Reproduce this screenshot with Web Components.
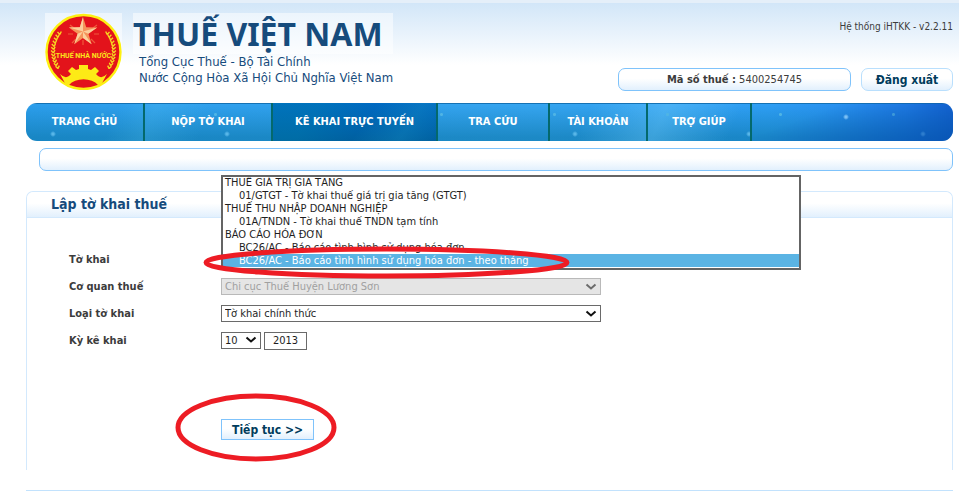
<!DOCTYPE html>
<html lang="vi">
<head>
<meta charset="utf-8">
<title>Thuế Việt Nam - iHTKK</title>
<style>
  body {
    margin: 0;
    background: #fff;
    color: #3c3c3c;
    font: 11px/16px "DejaVu Sans Condensed", "Noto Sans", sans-serif;
    --line: #7fc3fb;
    --line-soft: #d3e9fd;
    --navy: #164b7c;
  }
</style>
</head>
<body>
<tax-page>
  <site-header slot="header" version="Hệ thống iHTKK - v2.2.11" tax-code="5400254745"></site-header>
  <main-nav slot="nav"></main-nav>
  <panel-box heading="Lập tờ khai thuế">
    <declaration-form></declaration-form>
  </panel-box>
</tax-page>

<script>
// page frame
class TaxPage extends HTMLElement {
  constructor() {
    super();
    this.attachShadow({ mode: "open" }).innerHTML = `
      <style>
        :host {
          display: block;
          border-top: 3px solid #e5eff9;
          background: linear-gradient(#d2e6f8, #fff 62px) no-repeat;
        }
        .content { padding: 0 6px 0 26px; }
        .subbar {
          height: 21px;
          margin: 7px 0 20px 13px;
          border: 1px solid var(--line);
          border-radius: 7px;
          background: linear-gradient(#fff 45%, #e2f0fd);
        }
        footer { margin-top: 20px; border-top: 1px solid #c2e2fd; }
      </style>
      <slot name="header"></slot>
      <div class="content">
        <slot name="nav"></slot>
        <div class="subbar"></div>
        <slot></slot>
        <footer></footer>
      </div>
    `;
  }
}

// round red emblem with star, wheat and gear
class TaxEmblem extends HTMLElement {
  constructor() {
    super();
    this.attachShadow({ mode: "open" }).innerHTML = `
      <style>
        :host { display: block; width: 77px; height: 77px; background: #ffffff80; }
        svg { display: block; }
      </style>
      <svg width="77" height="77" viewBox="0 0 77 77">
        <circle cx="38.5" cy="39" r="37" fill="#e3131b" stroke="#fdf012" stroke-width="2.4"/>
        <path d="M25 12l4 3M52 12l-4 3M23 21l5 0M54 21l-5 0M27 30l4-4M50 30l-4-4M38 27v5" stroke="#ee5a3c" stroke-width="1.2"/>
        <path d="M38 4l3.2 10.2 11 .2-8.8 6.4 3.3 10.4L38 25l-8.7 6.2 3.3-10.4-8.8-6.4 11-.2z" fill="#f5935a"/>
        <path d="M38 4v14.5l-3.2-4.3zM52.2 14.4L38 18.5l5.4 2.3zM46.7 31.2L38 18.5V25zM29.3 31.2L38 18.5l-5.4 2.3zM23.8 14.4L38 18.5l-3.2-4.3z" fill="#fbcf9c"/>
        <g class="wheat"></g>
        <path d="M15 61q5 5 9 2l2-2-3-3 4-4 4 3 3-1v-4h9v4l3 1 4-3 4 4-3 3 2 2q4 3 9-2l-6 11-3 0a17 12 0 0 0-29 0l-3 0z" fill="#fdea16"/>
        <text x="38.5" y="45" text-anchor="middle" fill="#fbe51b" font-family="Roboto, sans-serif" font-weight="700" font-size="7">THUẾ NHÀ NƯỚC</text>
      </svg>
    `;
    this.drawWheat();
  }

  drawWheat() {
    let d = "";
    for (let i = 0; i < 12; i++) {
      const a = (142 + i * 6.3) * Math.PI / 180;
      for (const s of [-1, 1]) {
        const x = (38.5 - s * Math.cos(a) * 30).toFixed(1);
        const y = (40 - Math.sin(a) * 30).toFixed(1);
        d += `M${x} ${y}l${s * 2.4} -2.4M${x} ${y}l${-s * 1.4} -3`;
      }
    }
    this.shadowRoot.querySelector(".wheat").innerHTML =
      `<path d="${d}" fill="none" stroke="#f8d420" stroke-width="1.4"/>`;
  }
}

class SiteHeader extends HTMLElement {
  connectedCallback() {
    this.attachShadow({ mode: "open" }).innerHTML = `
      <style>
        :host {
          display: flex;
          justify-content: space-between;
          height: 90px;
          padding: 10px 6px 0 45px;
        }
        .brand { display: flex; gap: 11px; color: var(--navy); }
        h1 {
          margin: 0;
          height: 41px;
          background: #ffffff80;
          font: bold 32px/41px "Noto Sans", sans-serif;
        }
        .brand p { margin: 0; padding-left: 6px; font-size: 13px; }
        .side {
          display: flex;
          flex-direction: column;
          align-items: flex-end;
          justify-content: space-between;
          padding: 6px 0 12px;
        }
        .version { font-size: 10px; }
        .account { display: flex; gap: 10px; }
        .code, button {
          box-sizing: border-box;
          height: 23px;
          border: 1px solid var(--line);
          border-radius: 7px;
          background: linear-gradient(#fff 45%, #e2f0fd);
          text-align: center;
        }
        .code { width: 233px; line-height: 22px; }
        button {
          width: 92px;
          padding: 0;
          border-color: #b9dffd;
          color: #003c5c;
          font: bold 12px "DejaVu Sans Condensed", sans-serif;
        }
      </style>
      <div class="brand">
        <tax-emblem></tax-emblem>
        <div>
          <h1>THUẾ VIỆT NAM</h1>
          <p>Tổng Cục Thuế - Bộ Tài Chính<br>Nước Cộng Hòa Xã Hội Chủ Nghĩa Việt Nam</p>
        </div>
      </div>
      <div class="side">
        <span class="version">${this.getAttribute("version")}</span>
        <div class="account">
          <div class="code"><b>Mã số thuế :</b> ${this.getAttribute("tax-code")}</div>
          <button type="button">Đăng xuất</button>
        </div>
      </div>
    `;
  }
}

class MainNav extends HTMLElement {
  constructor() {
    super();
    this.attachShadow({ mode: "open" }).innerHTML = `
      <style>
        :host { display: block; }
        nav {
          display: grid;
          grid-template-columns: 119px 128px 165px 112px 98px 104px 1fr;
          height: 38px;
          border-radius: 11px;
          overflow: hidden;
          background:
            linear-gradient(#1572b4, #1572b4) top / 100% 1px no-repeat,
            radial-gradient(circle, #8cd2ff 0 1px, transparent 3px) 700px -5px / 240px 38px no-repeat,
            radial-gradient(circle, #58b6e8 0 1px, transparent 3px) -60px 12px / 174px 38px,
            radial-gradient(circle, #4fb4e4 0 1px, transparent 2px) 20px -10px / 113px 43px,
            linear-gradient(115deg, transparent 10%, #5cc8f033 14%, transparent 20% 60%, #7cd4ff55 68%, transparent 76%),
            linear-gradient(transparent, #0b76a899 90%),
            linear-gradient(90deg, #2d9fee, #37a6f2 55%, #2f9ff6 80%, #2484ee 95%, #1b6fdd);
        }
        nav::after { content: ""; background: linear-gradient(160deg, transparent 30%, #0446b4aa); }
        a {
          border-right: 2px solid #04696c;
          color: #fff;
          font-weight: bold;
          line-height: 38px;
          text-align: center;
          text-decoration: none;
          white-space: nowrap;
        }
        a[aria-current] {
          background:
            linear-gradient(125deg, #0085b055 25%, transparent 55%, #1790c455 80%, transparent),
            linear-gradient(#0069c2, #00609f);
        }
      </style>
      <nav>
        <a href="#">TRANG CHỦ</a>
        <a href="#">NỘP TỜ KHAI</a>
        <a href="#" aria-current="page">KÊ KHAI TRỰC TUYẾN</a>
        <a href="#">TRA CỨU</a>
        <a href="#">TÀI KHOẢN</a>
        <a href="#">TRỢ GIÚP</a>
      </nav>
    `;
  }
}

class PanelBox extends HTMLElement {
  connectedCallback() {
    this.attachShadow({ mode: "open" }).innerHTML = `
      <style>
        :host {
          display: block;
          border: 1px solid var(--line-soft);
          border-bottom: 0;
          border-radius: 7px 7px 0 0;
        }
        h2 {
          margin: 0;
          padding-left: 24px;
          border-bottom: 1px solid var(--line-soft);
          border-radius: 7px 7px 0 0;
          background: linear-gradient(#fff 45%, #e2f0fd);
          color: var(--navy);
          font-size: 14px;
          line-height: 25px;
        }
      </style>
      <h2>${this.getAttribute("heading")}</h2>
      <slot></slot>
    `;
  }
}

// red ring laid over its container, sized by the user
class MarkRing extends HTMLElement {
  constructor() {
    super();
    this.attachShadow({ mode: "open" }).innerHTML = `
      <style>
        :host {
          position: absolute;
          z-index: 2;
          pointer-events: none;
        }
        svg { display: block; width: 100%; height: 100%; overflow: visible; }
        ellipse {
          cx: 50%;
          cy: 50%;
          rx: calc(50% - 3px);
          ry: calc(50% - 3px);
          fill: none;
          stroke: #ed1c24;
          stroke-width: 5px;
        }
      </style>
      <svg><ellipse/></svg>
    `;
  }
}

const arrow = (color) =>
  `url("data:image/svg+xml,%3Csvg xmlns='http://www.w3.org/2000/svg' width='12' height='8'%3E%3Cpath d='M1.5 1.5L6 5.5l4.5-4' fill='none' stroke='%23${color}' stroke-width='2'/%3E%3C/svg%3E")`;

class DeclarationForm extends HTMLElement {
  constructor() {
    super();
    this.attachShadow({ mode: "open" }).innerHTML = `
      <style>
        :host { display: block; }
        form { padding: 28px 0 30px 42px; }
        .row {
          display: grid;
          grid-template-columns: 152px 1fr;
          align-items: center;
          height: 27px;
        }
        .row label { font-weight: bold; }
        .field { position: relative; display: flex; gap: 3px; }
        select, input {
          box-sizing: border-box;
          height: 17px;
          margin: 0;
          padding: 0 3px;
          border: 1px solid #6a6a6a;
          border-radius: 0;
          background-color: #fff;
          color: #1e1e1e;
          font: inherit;
          line-height: 15px;
        }
        select {
          width: 380px;
          appearance: none;
          background-image: ${arrow("111111")};
          background-repeat: no-repeat;
          background-position: right 3px center;
        }
        select:disabled {
          border-color: #b9b9b9;
          background-color: #e5e5e5;
          background-image: ${arrow("6c6c6c")};
          color: #a0a0a0;
          opacity: 1;
        }
        #thang { width: 40px; }
        #nam { width: 43px; height: 18px; text-align: center; }
        .popup { position: absolute; bottom: -10px; left: 0; z-index: 1; }
        .popup select {
          display: block;
          width: 580px;
          height: 95px;
          padding: 0;
          border: 2px solid #646464;
          background-image: none;
          overflow: hidden;
        }
        optgroup, option { font: inherit; }
        optgroup { padding: 0; line-height: 12px; }
        .popup option {
          box-sizing: border-box;
          min-height: 0;
          height: 13px;
          padding: 0 0 0 16px;
          line-height: 13px;
        }
        .popup option:first-of-type { margin-top: -1px; }
        .popup option::before { content: none; }
        .popup option:checked {
          background: #5bb4e4 linear-gradient(#5bb4e4, #5bb4e4);
          color: #fff;
          -webkit-text-fill-color: #fff;
        }
        .list-ring { left: -18px; bottom: -19px; width: 367px; height: 33px; }
        .actions { position: relative; margin: 65px 0 0 152px; }
        .actions button {
          display: block;
          box-sizing: border-box;
          width: 93px;
          height: 21px;
          padding: 0;
          border: 1px solid var(--line);
          background: linear-gradient(#fff 45%, #e2f0fd);
          color: #003c5c;
          font: bold 12px "DejaVu Sans Condensed", sans-serif;
        }
        .button-ring { left: -46px; top: -26px; width: 162px; height: 69px; }
      </style>
      <form>
        <div class="row">
          <label for="to-khai">Tờ khai</label>
          <div class="field">
            <div class="popup">
              <select id="to-khai" size="7">
                <optgroup label="THUẾ GIÁ TRỊ GIA TĂNG">
                  <option>01/GTGT - Tờ khai thuế giá trị gia tăng (GTGT)</option>
                </optgroup>
                <optgroup label="THUẾ THU NHẬP DOANH NGHIỆP">
                  <option>01A/TNDN - Tờ khai thuế TNDN tạm tính</option>
                </optgroup>
                <optgroup label="BÁO CÁO HÓA ĐƠN">
                  <option>BC26/AC - Báo cáo tình hình sử dụng hóa đơn</option>
                  <option selected>BC26/AC - Báo cáo tình hình sử dụng hóa đơn - theo tháng</option>
                </optgroup>
              </select>
            </div>
            <mark-ring class="list-ring"></mark-ring>
          </div>
        </div>
        <div class="row">
          <label for="co-quan">Cơ quan thuế</label>
          <div class="field">
            <select id="co-quan" disabled><option>Chi cục Thuế Huyện Lương Sơn</option></select>
          </div>
        </div>
        <div class="row">
          <label for="loai">Loại tờ khai</label>
          <div class="field">
            <select id="loai"><option>Tờ khai chính thức</option></select>
          </div>
        </div>
        <div class="row">
          <label for="thang">Kỳ kê khai</label>
          <div class="field">
            <select id="thang"><option>10</option></select>
            <input id="nam" value="2013" aria-label="Năm">
          </div>
        </div>
        <div class="actions">
          <button type="button">Tiếp tục &gt;&gt;</button>
          <mark-ring class="button-ring"></mark-ring>
        </div>
      </form>
    `;
  }
}

customElements.define("tax-emblem", TaxEmblem);
customElements.define("mark-ring", MarkRing);
customElements.define("tax-page", TaxPage);
customElements.define("site-header", SiteHeader);
customElements.define("main-nav", MainNav);
customElements.define("panel-box", PanelBox);
customElements.define("declaration-form", DeclarationForm);
</script>
</body>
</html>
